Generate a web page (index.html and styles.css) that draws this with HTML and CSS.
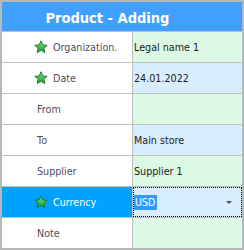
FILE: index.html
```html
<!DOCTYPE html>
<html>
<head>
<meta charset="utf-8">
<link rel="stylesheet" href="styles.css">
</head>
<body>
<div class="panel">
  <div class="header">Product - Adding</div>
  <div class="grid">
    <div class="label star-label"><svg class="star" viewBox="0 0 14 14"><defs><linearGradient id="g1" x1="0" y1="0" x2="0" y2="1"><stop offset="0" stop-color="#7fe07f"/><stop offset="1" stop-color="#0fa32a"/></linearGradient></defs><path d="M7 0.8 L8.8 4.9 L13.2 5.3 L9.9 8.2 L10.9 12.6 L7 10.3 L3.1 12.6 L4.1 8.2 L0.8 5.3 L5.2 4.9 Z" fill="url(#g1)" stroke="#1e6b2c" stroke-width="0.9" stroke-linejoin="round"/></svg><span>Organization.</span></div>
    <div class="value green">Legal name 1</div>

    <div class="label star-label"><svg class="star" viewBox="0 0 14 14"><path d="M7 0.8 L8.8 4.9 L13.2 5.3 L9.9 8.2 L10.9 12.6 L7 10.3 L3.1 12.6 L4.1 8.2 L0.8 5.3 L5.2 4.9 Z" fill="url(#g1)" stroke="#1e6b2c" stroke-width="0.9" stroke-linejoin="round"/></svg><span>Date</span></div>
    <div class="value blue">24.01.2022</div>

    <div class="label">From</div>
    <div class="value green"></div>

    <div class="label">To</div>
    <div class="value blue">Main store</div>

    <div class="label">Supplier</div>
    <div class="value green">Supplier 1</div>

    <div class="label star-label selected"><svg class="star" viewBox="0 0 14 14"><path d="M7 0.8 L8.8 4.9 L13.2 5.3 L9.9 8.2 L10.9 12.6 L7 10.3 L3.1 12.6 L4.1 8.2 L0.8 5.3 L5.2 4.9 Z" fill="url(#g1)" stroke="#1e6b2c" stroke-width="0.9" stroke-linejoin="round"/></svg><span>Currency</span></div>
    <div class="value blue focus"><span class="sel">USD</span><span class="arrow"></span></div>

    <div class="label">Note</div>
    <div class="value green"></div>
  </div>
</div>
</body>
</html>
```
FILE: styles.css
```css
html, body {
  margin: 0;
  padding: 0;
  background: #ffffff;
}
.panel {
  width: 240px;
  height: 246px;
  border: 2px solid #b8b8b8;
  font-family: "DejaVu Sans", sans-serif;
  font-size: 9.6px;
  overflow: hidden;
}
.header {
  height: 26px;
  padding-top: 3px;
  background: #40a0ff;
  color: #ffffff;
  font-family: "DejaVu Sans Condensed", "DejaVu Sans", sans-serif;
  font-weight: bold;
  font-size: 14.5px;
  line-height: 26px;
  padding-right: 29px;
  text-align: center;
}
.grid {
  display: grid;
  grid-template-columns: 130px 109px;
  grid-auto-rows: 30px;
  column-gap: 1px;
  row-gap: 1px;
  background: #c0c0c0;
  padding-top: 1px;
}
.label {
  background: #ffffff;
  color: #524b5c;
  display: flex;
  align-items: center;
  padding-left: 35px;
}
.star-label {
  padding-left: 32px;
}
.star {
  width: 14px;
  height: 14px;
  margin-right: 5px;
  flex: none;
}
.selected {
  background: #00a2ff;
  color: #ffffff;
}
.value {
  display: flex;
  align-items: center;
  padding-left: 1px;
  color: #1c1c1c;
}
.green { background: #ddf9e3; }
.blue { background: #d8eefe; }
.focus {
  outline: 1px dotted #000000;
  outline-offset: -1px;
  position: relative;
}
.sel {
  background: #3399ff;
  color: #ffffff;
  padding: 2px 1px;
}
.arrow {
  position: absolute;
  right: 10px;
  top: 14px;
  width: 0;
  height: 0;
  border-left: 3px solid transparent;
  border-right: 3px solid transparent;
  border-top: 3px solid #555555;
}
```
